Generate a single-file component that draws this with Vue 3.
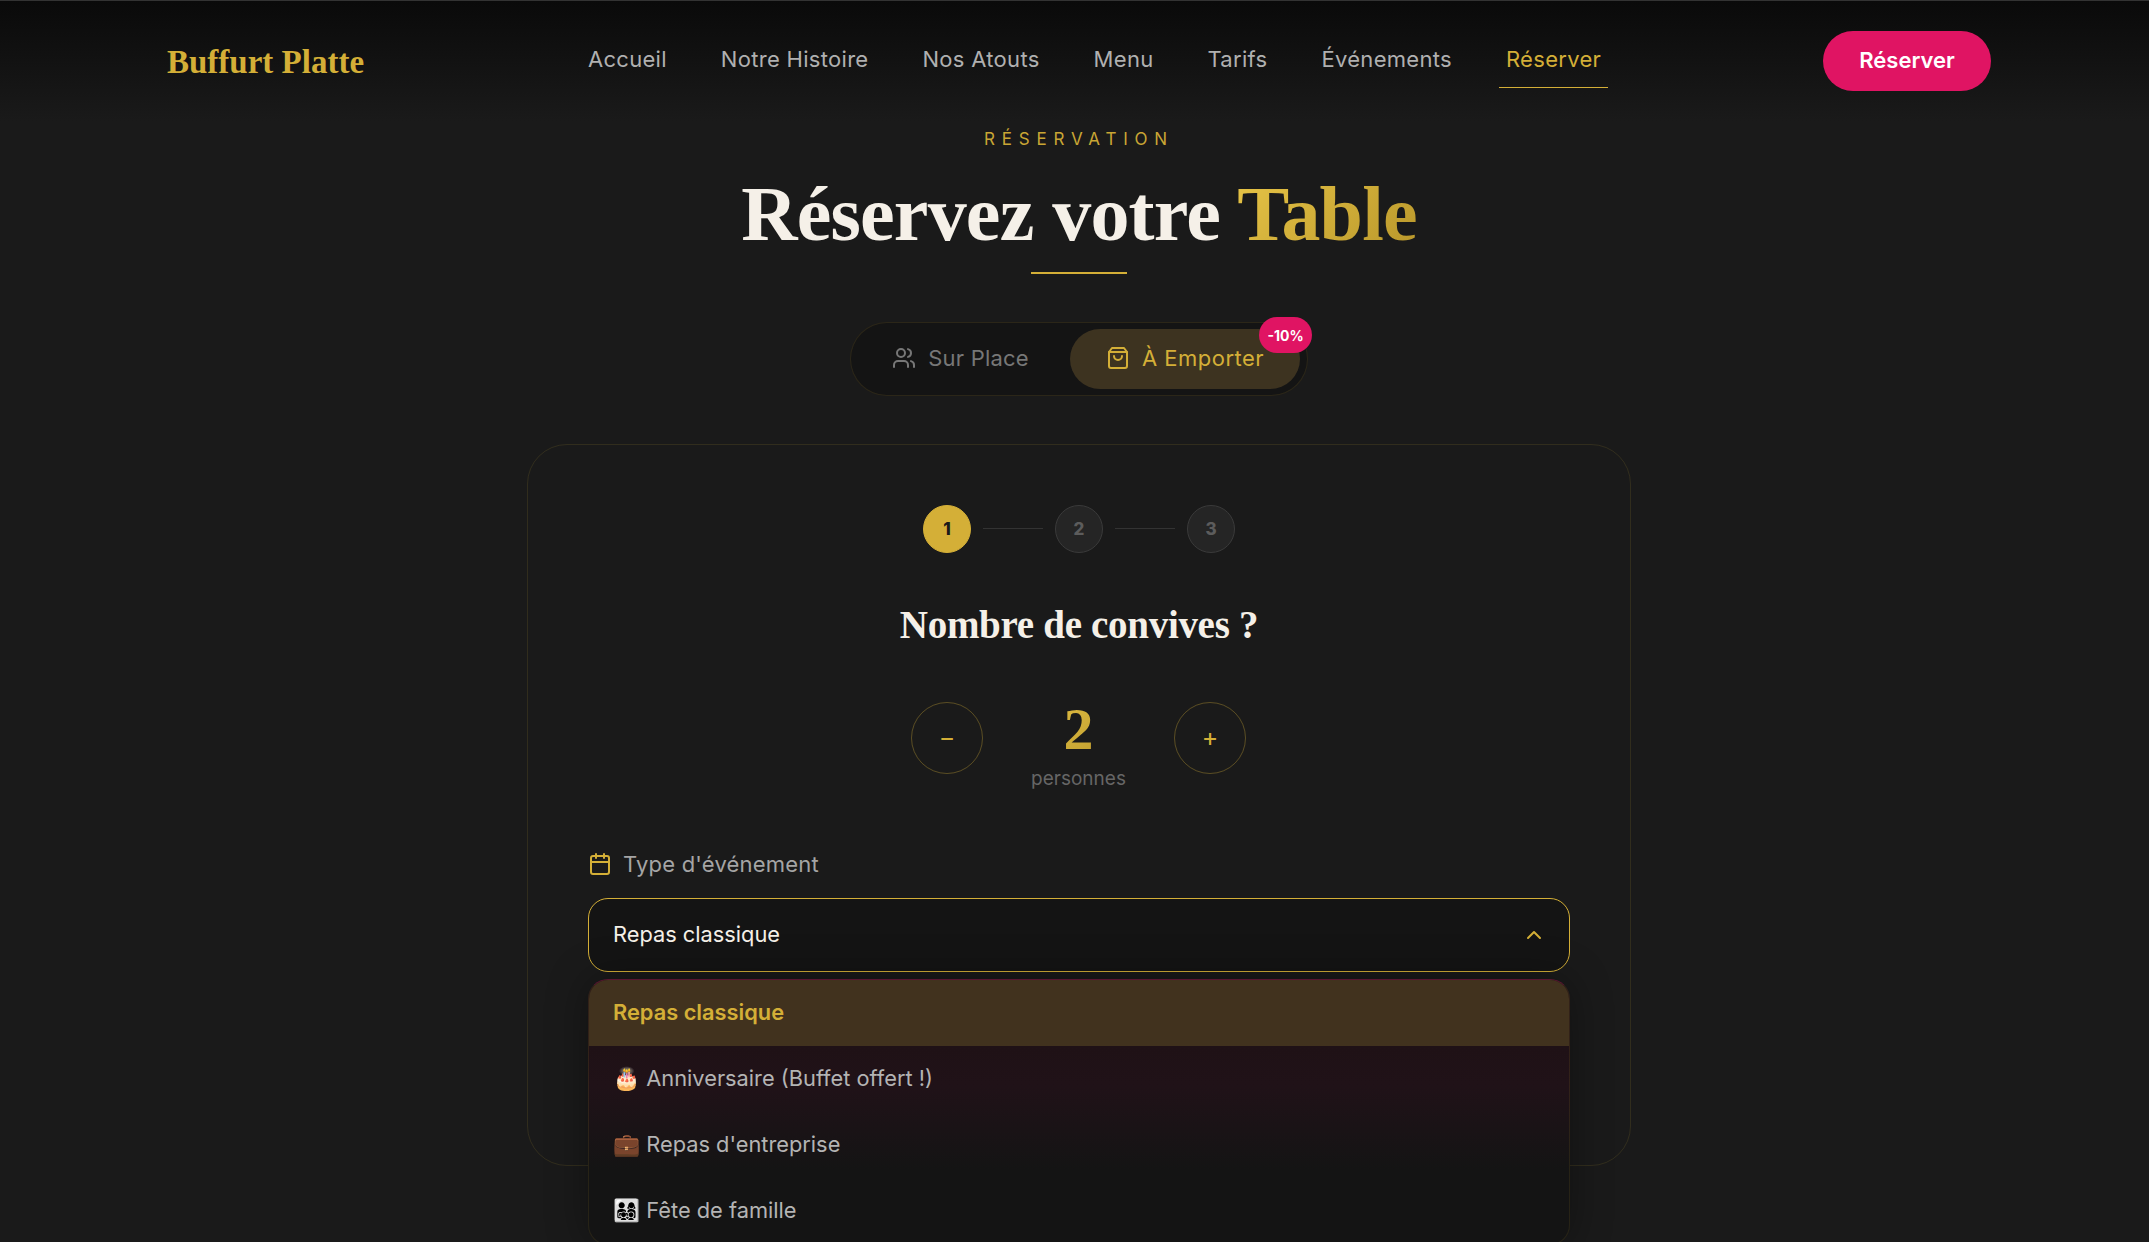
<template>
  <div class="page">
    <header class="nav">
      <div class="logo">Buffurt Platte</div>
      <nav class="links">
        <a v-for="link in links" :key="link" class="link" :class="{ active: link === 'Réserver' }">{{ link }}</a>
      </nav>
      <button class="cta">Réserver</button>
    </header>

    <main class="main">
      <div class="eyebrow">RÉSERVATION</div>
      <h1 class="title">Réservez votre <span class="gold">Table</span></h1>
      <div class="rule"></div>

      <div class="toggle">
        <button class="mode">
          <svg class="ico" viewBox="0 0 24 24"><path d="M16 21v-2a4 4 0 0 0-4-4H6a4 4 0 0 0-4 4v2" /><circle cx="9" cy="7" r="4" /><path d="M22 21v-2a4 4 0 0 0-3-3.87" /><path d="M16 3.13a4 4 0 0 1 0 7.75" /></svg>
          Sur Place
        </button>
        <button class="mode on">
          <svg class="ico" viewBox="0 0 24 24"><path d="M6 2 3 6v14a2 2 0 0 0 2 2h14a2 2 0 0 0 2-2V6l-3-4Z" /><path d="M3 6h18" /><path d="M16 10a4 4 0 0 1-8 0" /></svg>
          À Emporter
          <span class="badge">-10%</span>
        </button>
      </div>

      <section class="card">
        <div class="steps">
          <template v-for="n in 3" :key="n">
            <div class="step" :class="{ current: n === 1 }">{{ n }}</div>
            <div v-if="n < 3" class="bar"></div>
          </template>
        </div>

        <h2 class="question">Nombre de convives ?</h2>

        <div class="counter">
          <button class="round">−</button>
          <div class="count">
            <div class="num">{{ guests }}</div>
            <div class="unit">personnes</div>
          </div>
          <button class="round">+</button>
        </div>

        <div class="field-label">
          <svg class="ico cal" viewBox="0 0 24 24"><path d="M8 2v4" /><path d="M16 2v4" /><rect x="3" y="4" width="18" height="18" rx="2" /><path d="M3 10h18" /></svg>
          Type d'événement
        </div>

        <div class="select-wrap">
          <div class="select">
            <span>Repas classique</span>
            <svg class="chev" viewBox="0 0 24 24"><path d="m18 15-6-6-6 6" /></svg>
          </div>
          <ul class="menu">
            <li v-for="opt in options" :key="opt" class="opt" :class="{ picked: opt === 'Repas classique' }">{{ opt }}</li>
          </ul>
        </div>
      </section>
    </main>
  </div>
</template>

<script setup>
import { ref } from 'vue';

const guests = ref(2);
const links = ['Accueil', 'Notre Histoire', 'Nos Atouts', 'Menu', 'Tarifs', 'Événements', 'Réserver'];
const options = ['Repas classique', '🎂 Anniversaire (Buffet offert !)', "💼 Repas d'entreprise", '👨‍👩‍👧‍👦 Fête de famille'];
</script>

<style>
html, body {
  margin: 0;
  background: #1a1a1a;
  overflow: hidden;
}
</style>

<style scoped>
.page {
  height: 1242px;
  overflow: hidden;
  background: #1a1a1a;
  border-top: 1px solid #333;
  box-sizing: border-box;
  font-family: Inter, "Liberation Sans", sans-serif;
  color: #f5f0e8;
}

.nav {
  height: 120px;
  box-sizing: border-box;
  padding: 0 158px 0 167px;
  display: flex;
  align-items: center;
  justify-content: space-between;
  background: linear-gradient(to bottom, #0a0a0a, #1a1a1a);
}

.logo {
  margin-top: 2px;
  font-family: "Liberation Serif", serif;
  font-weight: 700;
  font-size: 33px;
  color: #d4af37;
}

.links {
  display: flex;
  gap: 54px;
  margin-left: 2px;
  margin-bottom: 5px;
}

.link {
  position: relative;
  font-size: 22px;
  letter-spacing: 0.3px;
  color: #b0b0b0;
  padding: 7px 0;
}

.link.active {
  color: #d4af37;
}

.link.active::after {
  content: '';
  position: absolute;
  left: -7px;
  right: -7px;
  bottom: -9px;
  height: 1px;
  background: #d4af37;
}

.cta {
  width: 168px;
  height: 60px;
  padding: 0 0 2px;
  border: none;
  border-radius: 30px;
  background: #e01463;
  color: #fff;
  font: 600 22px Inter, sans-serif;
}

.main {
  padding-left: 9px;
  display: flex;
  flex-direction: column;
  align-items: center;
}

.eyebrow {
  margin-top: 8px;
  font-size: 17px;
  letter-spacing: 6.8px;
  color: #c9a634;
  line-height: 20px;
}

.title {
  margin: 20px 0 0;
  font-family: "Liberation Serif", serif;
  font-weight: 700;
  font-size: 78px;
  letter-spacing: -0.8px;
  line-height: 90px;
  color: #f5f0e8;
}

.gold, .num {
  background: linear-gradient(135deg, #e8c547, #b8962a);
  -webkit-background-clip: text;
  background-clip: text;
  color: transparent;
}

.rule {
  width: 96px;
  height: 2px;
  margin-top: 13px;
  background: #d4af37;
}

.toggle {
  margin-top: 48px;
  width: 458px;
  height: 74px;
  box-sizing: border-box;
  padding: 6px;
  display: flex;
  gap: 6px;
  border: 1px solid rgba(212, 175, 55, 0.12);
  border-radius: 37px;
  background: #141414;
}

.mode {
  position: relative;
  height: 60px;
  flex: 0 0 207px;
  display: flex;
  align-items: center;
  justify-content: center;
  gap: 12px;
  padding: 0 0 2px;
  border: none;
  border-radius: 30px;
  background: transparent;
  color: #777;
  font: 400 22px Inter, sans-serif;
  letter-spacing: 0.2px;
}

.mode.on {
  flex: 0 0 230px;
  background: #3d3320;
  color: #d4af37;
  letter-spacing: 0.5px;
}

.ico {
  width: 24px;
  height: 24px;
  fill: none;
  stroke: currentColor;
  stroke-width: 2;
  stroke-linecap: round;
  stroke-linejoin: round;
}

.badge {
  position: absolute;
  top: -12px;
  right: -12px;
  width: 53px;
  height: 36px;
  display: flex;
  align-items: center;
  justify-content: center;
  border-radius: 18px;
  background: #e01463;
  color: #fff;
  font-size: 14px;
  font-weight: 700;
  letter-spacing: 0;
}

.card {
  margin-top: 48px;
  width: 1104px;
  height: 722px;
  box-sizing: border-box;
  padding: 60px;
  border: 1px solid rgba(212, 175, 55, 0.13);
  border-radius: 40px;
}

.steps {
  display: flex;
  align-items: center;
  justify-content: center;
  gap: 12px;
}

.step {
  width: 48px;
  height: 48px;
  box-sizing: border-box;
  display: flex;
  align-items: center;
  justify-content: center;
  border: 1px solid #3a3a3a;
  border-radius: 50%;
  background: #252525;
  color: #5c5c5c;
  font-size: 17px;
  font-weight: 800;
}

.step.current {
  background: #d4af37;
  border-color: #d4af37;
  color: #1a1a1a;
}

.bar {
  width: 60px;
  height: 1px;
  margin-top: -1px;
  background: #333;
}

.question {
  margin: 47px 0 0;
  text-align: center;
  font-family: "Liberation Serif", serif;
  font-weight: 700;
  font-size: 39px;
  letter-spacing: -0.3px;
  line-height: 50px;
  color: #f5f0e8;
}

.counter {
  margin-top: 36px;
  padding-right: 1px;
  display: flex;
  align-items: center;
  justify-content: center;
  gap: 48px;
}

.round {
  width: 72px;
  height: 72px;
  padding: 0 0 2px;
  border: 1px solid rgba(212, 175, 55, 0.35);
  border-radius: 50%;
  background: transparent;
  color: #d4af37;
  font: 400 25px Inter, sans-serif;
}

.count {
  width: 95px;
  text-align: center;
}

.num {
  margin-top: 7px;
  font-family: "Liberation Serif", serif;
  font-weight: 700;
  font-size: 60px;
  line-height: 72px;
}

.unit {
  margin-top: 3px;
  font-size: 19px;
  line-height: 22px;
  color: #666;
}

.field-label {
  margin-top: 61px;
  display: flex;
  align-items: center;
  gap: 11px;
  font-size: 22px;
  letter-spacing: 0.2px;
  color: #a5a5a5;
}

.cal {
  color: #d4af37;
}

.select-wrap {
  position: relative;
  margin-top: 21px;
}

.select {
  height: 74px;
  box-sizing: border-box;
  padding: 0 23px 2px 24px;
  display: flex;
  align-items: center;
  justify-content: space-between;
  border: 1px solid #d4af37;
  border-radius: 20px;
  background: #141414;
  color: #f5f0e8;
  font-size: 21.8px;
}

.chev {
  width: 24px;
  height: 24px;
  margin-top: 2px;
  fill: none;
  stroke: #d4af37;
  stroke-width: 2;
  stroke-linecap: round;
  stroke-linejoin: round;
}

.menu {
  position: absolute;
  top: 81px;
  left: 0;
  right: 0;
  margin: 0;
  padding: 0;
  list-style: none;
  overflow: hidden;
  border-radius: 20px;
  border: 1px solid rgba(212, 175, 55, 0.1);
  border-top-color: #5a1530;
  box-sizing: border-box;
  background: linear-gradient(to bottom, #1f1116 25%, #201218 40%, #141414 72%);
  box-shadow: 0 0 40px rgba(0, 0, 0, 0.35);
}

.opt {
  height: 66px;
  box-sizing: border-box;
  padding: 0 0 2px 24px;
  display: flex;
  align-items: center;
  font-size: 21.8px;
  color: #b4b4b4;
  font-family: Inter, "Noto Color Emoji", sans-serif;
}

.opt.picked {
  background: #41321e;
  color: #d4af37;
  font-weight: 600;
}
</style>
